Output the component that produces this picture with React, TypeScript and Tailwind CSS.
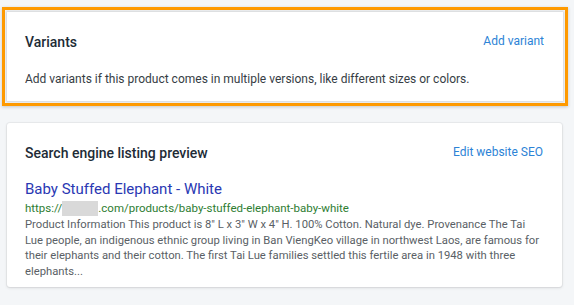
export default function App() {
  return (
    <div className="min-h-[305px] w-[574px] bg-[#f4f6f8] pt-[7px] pl-[2px] font-['Roboto',sans-serif] text-[#212b36]">
      <div className="w-[566px] border-[3px] border-[#ff9a00] p-[2px] shadow-[0_1px_3px_rgba(63,63,68,0.25)]">
        <div className="h-[89px] bg-white pr-[19px] pl-[18px] pt-[20px] shadow-[0_0_2px_1px_rgba(63,63,68,0.18)]">
          <div className="flex items-center justify-between">
            <h2 className="text-[14px] font-medium leading-5">Variants</h2>
            <a className="-mt-[3px] text-[12px] leading-5 text-[#2c83d6]">Add variant</a>
          </div>
          <p className="mt-[17px] text-[12px] leading-5 text-[#363d44]">
            Add variants if this product comes in multiple versions, like different sizes or colors.
          </p>
        </div>
      </div>

      <div className="mt-[17px] ml-[5px] h-[164px] w-[555px] rounded-[3px] bg-white pr-[19px] pl-[18px] pt-[20px] shadow-[0_0_0_1px_rgba(63,63,68,0.05),0_1px_3px_0_rgba(63,63,68,0.15)]">
        <div className="flex items-center justify-between">
          <h2 className="text-[14px] font-medium leading-5">Search engine listing preview</h2>
          <a className="-mt-[2px] text-[12px] leading-5 text-[#2c83d6]">Edit website SEO</a>
        </div>
        <div className="mt-[16px]">
          <div className="text-[15px] leading-[20px] text-[#2a38b3]">Baby Stuffed Elephant - White</div>
          <div className="mt-[1px] flex items-center text-[11.5px] leading-4 text-[#2e7d32]">
            <span>https://</span>
            <span className="inline-block h-[15px] w-[36px] bg-[#d9d9d9]" />
            <span>.com/products/baby-stuffed-elephant-baby-white</span>
          </div>
          <p className="mt-[1px] text-[11.25px] leading-[15.5px] text-[#5a5f66]">
            Product Information This product is 8&quot; L x 3&quot; W x 4&quot; H. 100% Cotton. Natural dye. Provenance The Tai Lue people, an indigenous ethnic group living in Ban ViengKeo village in northwest Laos, are famous for their elephants and their cotton. The first Tai Lue families settled this fertile area in 1948 with three elephants...
          </p>
        </div>
      </div>
    </div>
  );
}
